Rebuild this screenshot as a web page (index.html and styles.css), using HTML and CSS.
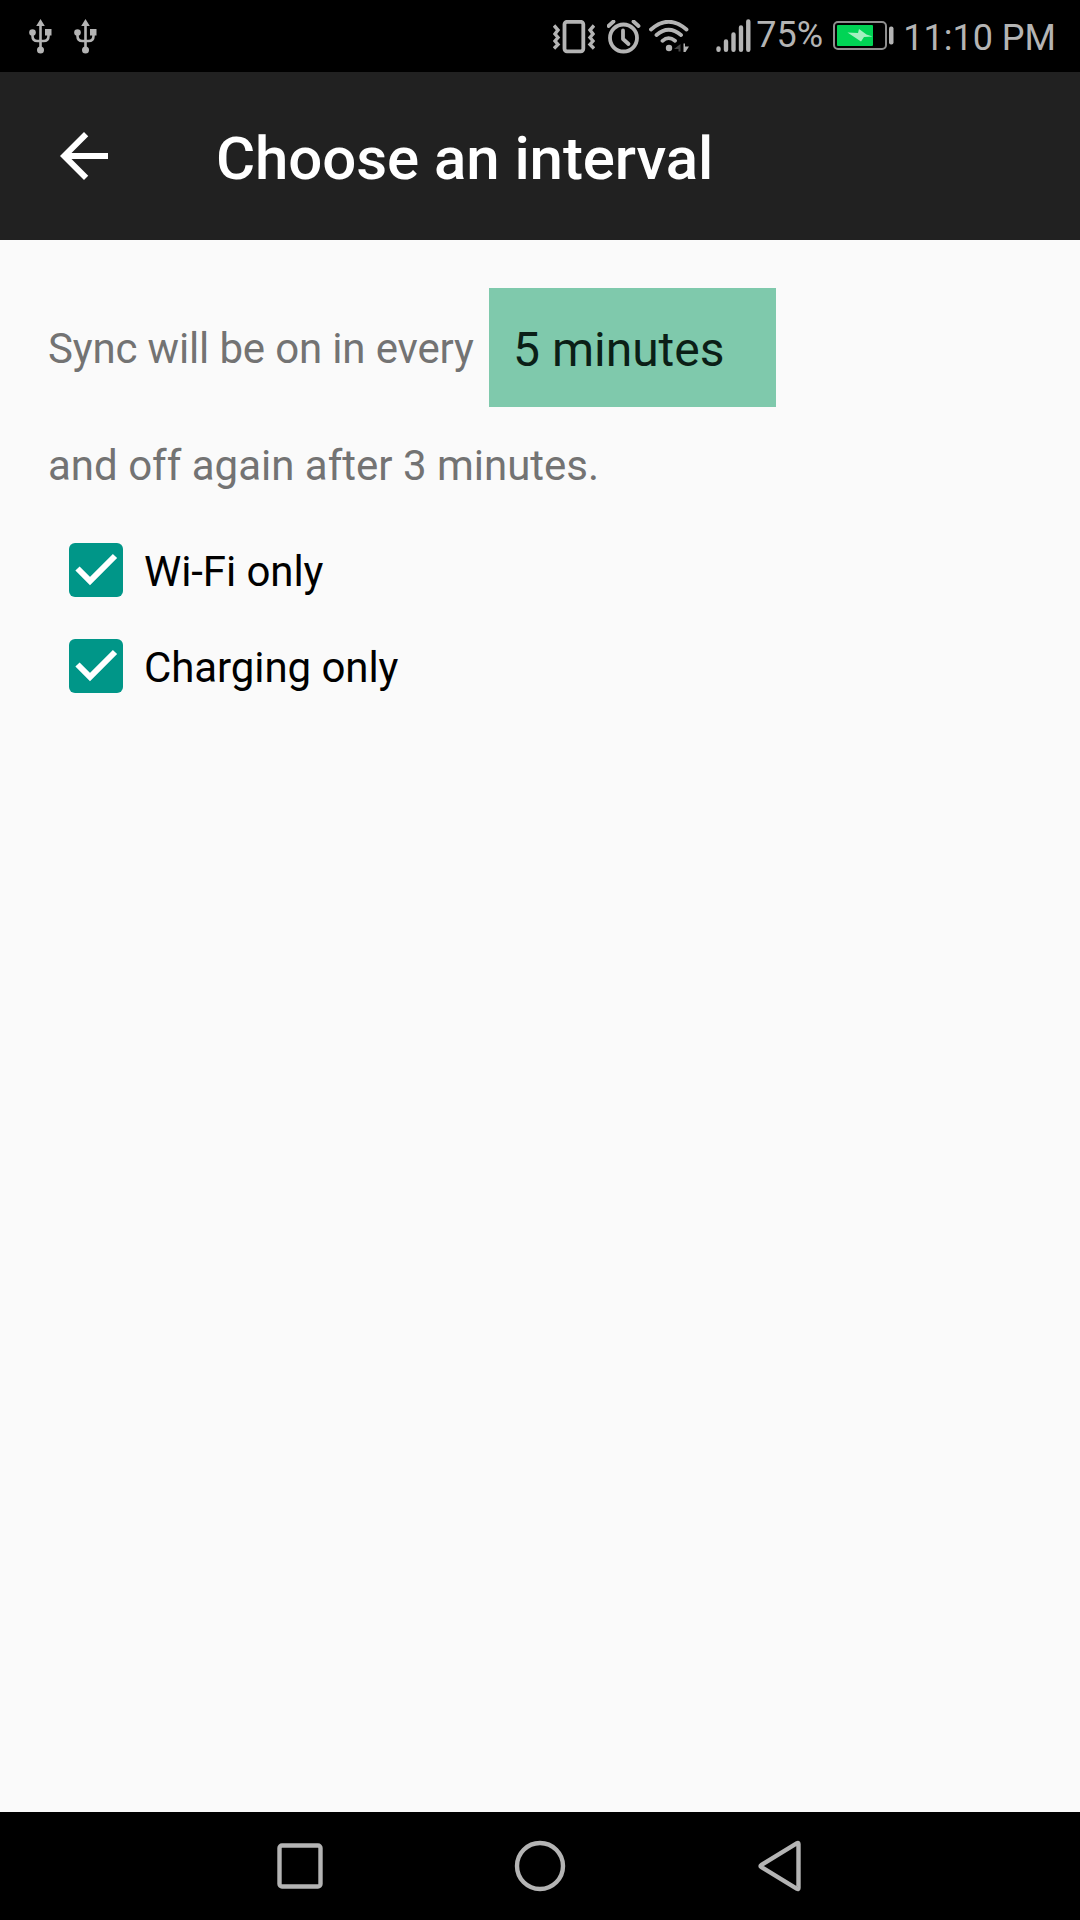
FILE: index.html
```
<!DOCTYPE html>
<html lang="en">
  <head>
    <meta charset="utf-8">
    <title>Choose an interval</title>
    <link rel="stylesheet" href="styles.css">
  </head>
  <body>

	<div class="status-bar">
		<div class="notifications">
			<svg class="icon-usb" width="24" height="36" viewBox="0 0 24 36">
				<path class="line" d="M11.5 5v26M3.5 14v3q0 5 5 5h6q5 0 5-5v-3" />
				<path class="fill" d="M11.5 0l4.3 7h-8.6zM16 10h6.5v6.500h-6.500z" />
				<circle class="fill" cx="3.500" cy="13.500" r="3.300" />
				<circle class="fill" cx="11.500" cy="31" r="3.500" />
			</svg>
			<svg class="icon-usb" width="24" height="36" viewBox="0 0 24 36">
				<path class="line" d="M11.5 5v26M3.5 14v3q0 5 5 5h6q5 0 5-5v-3" />
				<path class="fill" d="M11.5 0l4.3 7h-8.6zM16 10h6.5v6.500h-6.500z" />
				<circle class="fill" cx="3.500" cy="13.500" r="3.300" />
				<circle class="fill" cx="11.500" cy="31" r="3.500" />
			</svg>
		</div>
		<div class="system">
			<svg class="icon-vibrate" width="42" height="34" viewBox="0 0 42 34">
				<rect class="line wide" x="11.500" y="1.800" width="18.800" height="29.500" rx="2.500" />
				<path class="line wave" d="M1 5.500l4 4.500-3 4 3 3.500-3 3.500 3 3.500-4 4M41 5.500l-4 4.500 3 4-3 3.500 3 3.500-3 3.500 4 4" />
			</svg>
			<svg class="icon-alarm" width="34" height="34" viewBox="0 0 34 34">
				<circle class="line wide" cx="16.500" cy="18" r="13.500" />
				<path class="line wide" d="M16 10.500v8.500l5.500 5" />
				<path class="line wide" d="M1.500 6l5-4.500M31.500 6l-5-4.500" />
			</svg>
			<svg class="icon-wifi" width="40" height="34" viewBox="0 0 40 34">
				<path class="line wide" d="M2 9.500q17.500-15.500 35.500 0M7.500 15q12-10.500 24.500 0M13.500 20.800q6-5.300 12.500 0" />
				<circle class="fill" cx="20" cy="28" r="3.200" />
				<path class="dim" d="M31.500 24v7.500h-2v-2.500h-4.500z" />
				<path class="fill" d="M34.500 23.500h1.500v3h4l-3.500 5.500h-2z" />
			</svg>
			<svg class="icon-signal" width="36" height="34" viewBox="0 0 36 34">
				<path class="bars" d="M2.500 29.500v1.200M10 22.500v8.200M17.500 15.500v15.200M25 8.500v22.200M32.300 2.500v28.200" />
			</svg>
			<span class="percent">75%</span>
			<svg class="icon-battery" width="61" height="30" viewBox="0 0 61 30">
				<rect class="case" x="1" y="1" width="52" height="27" rx="4" />
				<rect class="charge" x="4" y="4" width="36" height="21" rx="1" />
				<path class="bolt" d="M14.500 11.500l10.500.5 1-4 7.500 5.500 6 2-8.500.5-3 4.500z" />
				<rect class="fill" x="56" y="5.500" width="4.500" height="18" rx="2" />
			</svg>
			<span class="clock">11:10 PM</span>
		</div>
	</div>

	<div class="app-bar">
		<svg class="icon-back" width="48" height="48" viewBox="4 4 16 16">
			<path d="M20 11H7.830l5.590-5.590L12 4l-8 8 8 8 1.410-1.410L7.830 13H20v-2z" />
		</svg>
		<h1>Choose an interval</h1>
	</div>

	<div class="content">
		<div class="interval">
			<span>Sync will be on in every</span>
			<div class="spinner">5 minutes</div>
		</div>
		<p class="after">and off again after 3 minutes.</p>

		<div class="option">
			<svg class="checkbox" width="54" height="54" viewBox="0 0 54 54">
				<path d="M8.500 25.500L21 38l25-25" />
			</svg>
			<span>Wi-Fi only</span>
		</div>
		<div class="option">
			<svg class="checkbox" width="54" height="54" viewBox="0 0 54 54">
				<path d="M8.500 25.500L21 38l25-25" />
			</svg>
			<span>Charging only</span>
		</div>
	</div>

	<div class="nav-bar">
		<svg width="52" height="52" viewBox="0 0 52 52">
			<rect x="5.500" y="5.500" width="41" height="41" rx="2.500" />
		</svg>
		<svg width="52" height="52" viewBox="0 0 52 52">
			<circle cx="26" cy="26" r="23" />
		</svg>
		<svg width="52" height="52" viewBox="0 0 52 52">
			<path d="M44.500 4q0-1.500-1.500-.8L7.500 24.800q-2 1.200 0 2.400l35.500 21.600q1.500.7 1.500-.8z" />
		</svg>
	</div>

  </body>
</html>
```

FILE: styles.css
```
body { margin: 0; height: 1920px; display: flex; flex-direction: column; overflow: hidden; background: #fafafa; font-family: Roboto, "Noto Sans", sans-serif; }
svg { display: block; flex: none; }

/* status bar */
.status-bar { height: 72px; background: #000; color: #b4b4b4; display: flex; justify-content: space-between; box-sizing: border-box; padding: 19px 24px 0 29px; font-size: 36px; line-height: 36px; }
.notifications { display: flex; gap: 21px; }
.system { display: flex; align-items: flex-start; white-space: nowrap; }
.status-bar .line { fill: none; stroke: #b4b4b4; stroke-width: 2.6; }
.status-bar .wide { stroke-width: 3.8; stroke-linecap: round; stroke-linejoin: round; }
.status-bar .wave { stroke-width: 3.4; }
.status-bar .fill { fill: #b4b4b4; }
.status-bar .dim { fill: #444; }
.icon-vibrate, .icon-alarm, .icon-wifi { margin-top: 1px; }
.icon-alarm { margin-left: 12px; }
.icon-wifi { margin-left: 8px; }
.icon-signal { margin-left: 27px; }
.bars { fill: none; stroke: #b4b4b4; stroke-width: 4.4; stroke-linecap: round; }
.percent { margin-left: 4px; margin-top: -2px; width: 77px; }
.icon-battery { margin-top: 2px; }
.case { fill: none; stroke: #8f8f8f; stroke-width: 2; }
.charge { fill: #00d455; }
.bolt { fill: #a5f0c1; }
.clock { margin-left: 9px; margin-top: 1px; }

/* app bar */
.app-bar { height: 168px; background: #212121; color: #fff; display: flex; align-items: center; box-sizing: border-box; padding: 0 60px; }
.icon-back { fill: #fff; }
.app-bar h1 { margin: 0 0 0 108px; padding-top: 5px; font-size: 60px; line-height: 70px; font-weight: 500; letter-spacing: -0.08px; }

/* settings */
.content { flex: 1; padding: 48px 48px 0; color: #737373; font-size: 42px; line-height: 50px; }
.interval { display: flex; align-items: center; height: 119px; }
.interval > span { width: 441px; padding-top: 2px; white-space: nowrap; letter-spacing: -0.16px; }
.spinner { width: 287px; height: 119px; box-sizing: border-box; padding: 4px 24px 0; background: #7fc9ac; color: #0b1f17; font-size: 48px; line-height: 115px; }
.after { margin: 34px 0 31px; }
.option { display: flex; align-items: center; height: 96px; padding-left: 21px; color: #000; }
.option span { margin-left: 21px; padding-top: 3px; letter-spacing: -0.08px; }
.checkbox { background: #009688; border-radius: 6px; }
.checkbox path { fill: none; stroke: #fff; stroke-width: 6; }

/* navigation */
.nav-bar { height: 108px; background: #000; display: flex; align-items: center; justify-content: center; gap: 188px; }
.nav-bar svg { fill: none; stroke: #b4b4b4; stroke-width: 4.4; }
```
